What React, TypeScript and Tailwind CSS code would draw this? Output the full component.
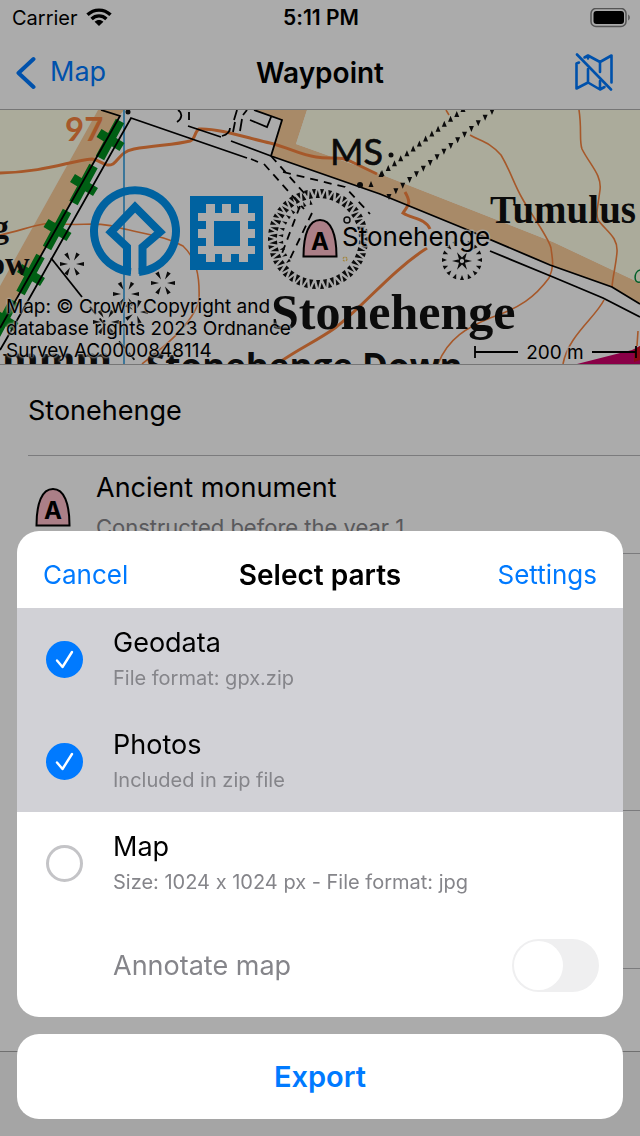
import { useState } from "react";

const halo = { paintOrder: "stroke" as const };

function WifiIcon() {
  return (
    <svg viewBox="0 0 26 20" className="h-5 w-[26px]" aria-hidden="true">
      <g fill="none" stroke="#000" strokeWidth="3.4">
        <path d="M1.500 6.800C8 0.500 18 0.500 24.500 6.800" />
        <path d="M5.600 10.900C9.800 6.900 16.200 6.900 20.400 10.900" />
      </g>
      <path d="M8.600 13.700C11.200 11.500 14.800 11.500 17.400 13.700L13 18.100Z" />
    </svg>
  );
}

function BatteryIcon() {
  return (
    <svg viewBox="0 0 40 20" className="h-5 w-10" aria-hidden="true">
      <rect x="1" y="0.500" width="35" height="18" rx="5" fill="none" stroke="#000" strokeOpacity="0.5" strokeWidth="1.500" />
      <rect x="3.500" y="3" width="30.500" height="13" rx="3" />
      <path d="M38.200 6.500C40.300 7.500 40.300 11.500 38.200 12.500Z" fillOpacity="0.5" />
    </svg>
  );
}

function MapOffIcon() {
  return (
    <svg viewBox="0 0 40 40" className="h-10 w-10" fill="none" stroke="#007aff" strokeWidth="2.600" strokeLinejoin="round" strokeLinecap="round" aria-hidden="true">
      <path d="M5 9.500L2.500 10.500V35.500L14 29.500L26 36.500L30.500 34M14 16V29.500M10.500 4.500L14 2.500L26 9L37.500 2.500V29.500M26 9V19M26 28V36.500M14 2.500V5.500" />
      <path d="M3 1.500L37 36.500" />
    </svg>
  );
}

function Monument({ x = 0, y = 0 }: { x?: number; y?: number }) {
  return (
    <g transform={`translate(${x} ${y})`}>
      <path d="M1.500 38.500C1.500 16 7 2 18 2S34.500 16 34.500 38.500Z" fill="#ffbeca" stroke="#000" strokeWidth="2" />
      <text x="18" y="32" textAnchor="middle" fontSize="24" fontWeight="700" fontFamily="Inter, sans-serif">A</text>
    </g>
  );
}

function tick(cx: number, cy: number, r: number, len: number, w: number, a: number, inward = true) {
  const c = Math.cos(a);
  const s = Math.sin(a);
  const base = inward ? r : r - len;
  const tip = inward ? r - len : r;
  return `M${cx + c * base - (s * w) / 2} ${cy + s * base + (c * w) / 2}L${cx + c * base + (s * w) / 2} ${cy + s * base - (c * w) / 2}L${cx + c * tip} ${cy + s * tip}Z`;
}

function ring(cx: number, cy: number, r: number, len: number, w: number, n: number, inward = true, start = 0, end = Math.PI * 2) {
  return Array.from({ length: n }, (_, i) => tick(cx, cy, r, len, w, start + ((end - start) * i) / n, inward)).join("");
}

function bank(x1: number, y1: number, x2: number, y2: number, n: number, side: number) {
  const dx = (x2 - x1) / n;
  const dy = (y2 - y1) / n;
  return Array.from({ length: n + 1 }, (_, i) => {
    const x = x1 + dx * i;
    const y = y1 + dy * i;
    return `M${x - 2.5} ${y + side * 2}L${x + 2.5} ${y + side * 2}L${x} ${y - side * 4}Z`;
  }).join("");
}

function MapDrawing() {
  return (
    <svg viewBox="0 110 640 254" preserveAspectRatio="xMidYMid slice" className="h-[254px] w-full" role="img" aria-label="Map">
      <rect y="110" width="640" height="254" fill="#fff" />
      <path d="M0 110H98L0 286Z" fill="#ffffe7" />
      <path d="M98 110H124L119 116L0 328V286Z" fill="#fbce9b" />
      <path d="M254 110H307L296 144L380 174L553 242L640 283V304L612 287L550 265L463 228L380 194L271 156L282 120Z" fill="#fbce9b" />
      <path d="M307 110H640V283L553 242L380 174L296 144Z" fill="#ffffe7" />
      <path d="M577 364L632 350L640 346V364Z" fill="#ce006b" />
      <path d="M634 350L640 346V360L634 362Z" fill="#d01020" />

      <g fill="none" stroke="#f8843f">
        <g strokeWidth="3">
          <path d="M0 173C45 172 70 161 92 159C101 160 105 168 113 164C120 159 120 152 134 149C155 145 175 145 190 141C196 139 194 132 199 129C220 128 250 139 270 143C290 148 300 155 316 157C332 160 340 155 352 162L377 174" />
          <path d="M405 192C412 204 408 205 403 213C412 219 425 218 430 229M427 248C390 272 365 305 335 328C315 342 300 348 280 362" />
        </g>
        <g strokeWidth="1.600">
          <path d="M0 235C25 230 45 220 62 224C85 226 97 221 120 228C150 235 167 237 183 246C196 258 200 275 199 300C193 325 160 350 142 364" />
          <path d="M470 135C480 141 490 142 501 155C511 172 513 182 522 198C530 213 548 236 551 248C552 258 555 265 549 278C535 297 520 308 490 318C468 327 448 338 438 364" />
          <path d="M579 110C582 130 579 140 582 149C590 165 602 175 600 190C597 212 596 213 598 220C607 232 618 237 617 252C616 265 613 275 612 287M604 300C595 318 568 336 563 364M446 110L449 115M638 331L637 346" />
        </g>
      </g>
      <path d="M640 270C634 271 633 284 640 282" fill="none" stroke="#008e3c" strokeWidth="1.500" />
      <path d="M124 110V364" stroke="#0086d8" strokeWidth="1.300" />

      <g stroke="#008e1e" strokeWidth="9.500">
        {[0, 1, 2, 3, 4].map((i) => (
          <path key={i} transform={`translate(${-26.5 * i} ${45 * i})`} d="M120 121L100 158M99 133L122 147" />
        ))}
      </g>
      <g fill="none" stroke="#000" strokeWidth="1.800">
        <path d="M101 110L120 116L0 328M0 350L7 338L131 118L247 158M251 159L258 162M188 126L221 137M231 141L271 156L380 194L463 228L550 265L612 287L640 304M490 251L553 277L603 298L640 317M254 110L282 120L271 156M250 120L267 127L271 117" />
        <path d="M51 258L82 297" />
        <path strokeDasharray="9 6" d="M90 307L138 364" />
        <path d="M222 136C229 134 230 131 230 128M237 110L234 120M247 110L243 115M235 122L233 132M242 119L240 131" />
        <path strokeDasharray="8 6" d="M264 164L304 209M271 156L305 194M283 172L345 187L370 214M312 213L288 263M300 206L281 256" />
        <path d="M178 110C183 113 182 119 177 122M189 112V120" />
      </g>
      <g fill="#111">
        <circle cx="128" cy="112" r="2.500" />
        <circle cx="391" cy="155" r="2.500" />
        <circle cx="360" cy="185" r="3" />
        <path d={ring(318, 239, 50, 6, 4, 38)} />
        <path d={ring(318, 239, 49, 8, 4, 38, false, 0.08, 6.36)} />
        <path d={ring(318, 239, 40, 5, 3, 12, false, 2.5, 4.7)} />
        <path d={ring(462, 260, 20, 5, 4, 16)} />
        <path d={ring(462, 261, 10, 8, 4, 6, false)} />
        <path d={ring(72, 264, 12, 8, 4, 6)} />
        <path d={ring(163, 283, 12, 8, 4, 6)} />
        <path d={ring(126, 294, 13, 8, 4, 6)} />
        <path d={ring(136, 312, 12, 8, 4, 5)} />
        <path d={ring(106, 322, 13, 8, 4, 6)} />
        <path d={bank(382, 174, 463, 110, 13, 1)} />
        <path d={bank(389, 196, 492, 111, 15, -1)} />
        <path d={bank(371, 185, 381, 175, 1, 1)} />
      </g>
      <circle cx="347" cy="220" r="3" fill="none" stroke="#111" strokeWidth="1.500" />
      <circle cx="345" cy="259" r="2" fill="none" stroke="#f2c75c" strokeWidth="1.200" strokeDasharray="2 1" />

      <g fill="none" stroke="#0092ef" strokeWidth="8">
        <path d="M131 272A41 41 0 1 1 139 272" />
        <path d="M127 274V247L111 232L135 207L160 232L142.500 247V274" />
      </g>
      <rect x="190" y="196" width="73" height="74" fill="#0092ef" />
      <path fill="#fff" fillRule="evenodd" d="M206 204H215V213H222V204H231V213H239V204H248V213H255V221H248V229H255V238H248V246H255V254H248V262H239V254H231V262H222V254H215V262H206V254H198V246H206V238H198V229H206V221H198V213H206ZM214 221V246H240V221Z" />

      <g fontFamily="Lato, sans-serif">
        <text x="65" y="141" fontSize="33" fontWeight="700" fill="#f8843f">97</text>
        <text x="330" y="165" fontSize="36" fill="#111" stroke="#111" strokeWidth="0.600">MS</text>
      </g>
      <g fontFamily="Liberation Serif, serif" fontWeight="700" fill="#111">
        <text x="490" y="223" fontSize="39">Tumulus</text>
        <text x="271" y="329" fontSize="50">Stonehenge</text>
        <text x="-8" y="238" fontSize="34">g</text>
        <text x="-12" y="275" fontSize="34">ow</text>
        <text x="2" y="374" fontSize="44">mmm</text>
      </g>
      <text x="146" y="379" fontSize="35" fontWeight="700" fontFamily="Open Sans, sans-serif" fill="#111">Stonehenge Down</text>

      <Monument x={302} y={218} />
      <g fontFamily="Inter, sans-serif" stroke="#fff" strokeOpacity="0.7" strokeWidth="3" strokeLinejoin="round">
        <text x="342" y="246" fontSize="26" style={halo}>Stonehenge</text>
        <text x="555" y="359" fontSize="19" textAnchor="middle" style={halo}>200 m</text>
      </g>
      <path d="M475 346V358M475 352H518M592 352H636M636 346V358" stroke="#000" strokeWidth="1.800" />
    </svg>
  );
}

type Part = { id: string; title: string; detail: string; checked: boolean };

const initialParts: Part[] = [
  { id: "geodata", title: "Geodata", detail: "File format: gpx.zip", checked: true },
  { id: "photos", title: "Photos", detail: "Included in zip file", checked: true },
  { id: "map", title: "Map", detail: "Size: 1024 x 1024 px - File format: jpg", checked: false },
];

function PartRow({ part, onToggle }: { part: Part; onToggle: () => void }) {
  return (
    <label className={`flex h-[102px] items-center gap-[30px] pl-[29px] ${part.checked ? "bg-[#d1d1d6]" : "bg-white"}`}>
      <span className="grid shrink-0 place-items-center">
        <input
          type="checkbox"
          checked={part.checked}
          onChange={onToggle}
          className="col-start-1 row-start-1 size-[37px] appearance-none rounded-full border-[3px] border-[#c4c4c7] checked:border-[#007aff] checked:bg-[#007aff]"
        />
        {part.checked && (
          <svg viewBox="0 0 37 37" className="pointer-events-none col-start-1 row-start-1 size-[37px]" fill="none" stroke="#fff" strokeWidth="2.400" strokeLinecap="round" strokeLinejoin="round" aria-hidden="true">
            <path d="M11 19.500L16.500 26L26 11" />
          </svg>
        )}
      </span>
      <span className="flex flex-col pt-0.5">
        <span className="text-[27px] leading-9">{part.title}</span>
        <span className="text-[20px] leading-[34px] text-[#85858a]">{part.detail}</span>
      </span>
    </label>
  );
}

export default function App() {
  const [parts, setParts] = useState(initialParts);
  const [annotate, setAnnotate] = useState(false);
  const toggle = (id: string) => setParts((list) => list.map((p) => (p.id === id ? { ...p, checked: !p.checked } : p)));

  return (
    <div className="flex min-h-screen flex-col bg-white font-[Inter,sans-serif] text-black [font-feature-settings:'calt'_0]">
      <div className="grid h-9 grid-cols-3 items-center pr-2.5 pl-3 text-[20px]">
        <div className="flex items-center gap-2">
          <span>Carrier</span>
          <WifiIcon />
        </div>
        <time className="text-center text-[21px] font-semibold">5:11 PM</time>
        <div className="flex justify-end">
          <BatteryIcon />
        </div>
      </div>
      <header className="grid h-[74px] grid-cols-3 items-center border-b border-[#b0b0b0] px-[26px] text-[27px]">
        <button type="button" className="-ml-2.5 flex items-center gap-3.5 justify-self-start text-[#007aff]">
          <svg viewBox="0 0 20 34" className="h-[34px] w-5" fill="none" stroke="#007aff" strokeWidth="4" strokeLinecap="round" strokeLinejoin="round" aria-hidden="true">
            <path d="M17.500 3L2.500 17L17.500 31" />
          </svg>
          Map
        </button>
        <h1 className="text-center text-[28px] font-semibold">Waypoint</h1>
        <button type="button" aria-label="Hide map" className="justify-self-end">
          <MapOffIcon />
        </button>
      </header>

      <main className="grow">
        <div className="relative border-b border-[#b0b0b0]">
          <MapDrawing />
          <p className="absolute bottom-0.5 left-1.5 text-[19px] leading-[22px] [text-shadow:0_0_2px_#fff,0_0_2px_#fff,0_0_3px_#fff]">
            Map: © Crown Copyright and
            <br />
            database rights 2023 Ordnance
            <br />
            Survey AC0000848114
          </p>
        </div>
        <div className="pl-7">
          <div className="flex h-[91px] items-center border-b border-[#b8b8bb] pt-0.5 text-[27px]">Stonehenge</div>
          <div className="flex h-[98px] items-center gap-[25px] border-b border-[#b8b8bb] pt-1 pl-[7px]">
            <svg viewBox="0 0 36 40" className="h-10 w-9" aria-hidden="true">
              <Monument />
            </svg>
            <div>
              <div className="text-[27px] leading-10">Ancient monument</div>
              <div className="text-[22px] leading-[38px] text-[#85858a]">Constructed before the year 1</div>
            </div>
          </div>
          <div className="h-[257px] border-b border-[#b8b8bb]" />
          <div className="h-[158px] border-b border-[#b8b8bb]" />
        </div>
      </main>
      <footer className="h-[85px] border-t border-[#a8a8a8] bg-[#f6f6f6]" />

      <div className="fixed inset-0 flex flex-col justify-end gap-[17px] bg-black/33 p-[17px]">
        <section role="dialog" aria-labelledby="sheet-title" className="overflow-hidden rounded-[22px] bg-white">
          <div className="grid h-[77px] grid-cols-3 items-center px-[26px] pt-2.5 text-[26px]">
            <button type="button" className="justify-self-start text-[#007aff]">Cancel</button>
            <h2 id="sheet-title" className="text-center text-[28px] font-semibold whitespace-nowrap">Select parts</h2>
            <button type="button" className="justify-self-end text-[#007aff]">Settings</button>
          </div>
          {parts.map((part) => (
            <PartRow key={part.id} part={part} onToggle={() => toggle(part.id)} />
          ))}
          <label className="flex h-[103px] items-center justify-between pr-6 pl-24 text-[27px] text-[#85858a]">
            <span className="pt-0.5">Annotate map</span>
            <input
              type="checkbox"
              role="switch"
              checked={annotate}
              onChange={() => setAnnotate(!annotate)}
              className="h-[53px] w-[87px] appearance-none rounded-full bg-[#efeff0] p-0.5 before:block before:size-[49px] before:rounded-full before:bg-white checked:bg-[#34c759] checked:before:ml-auto"
            />
          </label>
        </section>
        <button type="button" className="h-[85px] shrink-0 rounded-[22px] bg-white text-[29px] font-semibold text-[#007aff]">
          Export
        </button>
      </div>
    </div>
  );
}
